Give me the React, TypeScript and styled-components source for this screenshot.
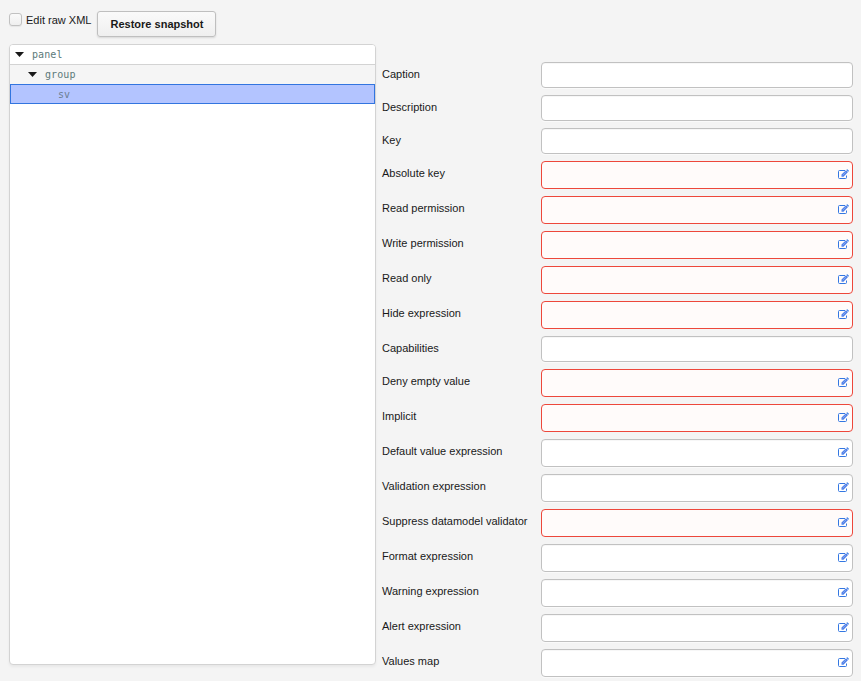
import React from 'react';
import styled, { createGlobalStyle } from 'styled-components';

const GlobalStyle = createGlobalStyle`
  html, body { margin: 0; padding: 0; background: #f4f4f4; }
  body { overflow: hidden; }
  * { box-sizing: border-box; }
`;

const Page = styled.div`
  width: 861px;
  height: 681px;
  padding: 11px 8px 0 9px;
  overflow: hidden;
  background: #f4f4f4;
  color: #191919;
  font-family: "Liberation Sans", Arial, sans-serif;
  font-size: 11px;
`;

const Toolbar = styled.header`
  display: flex;
  align-items: flex-start;
  height: 33px;
`;

const CheckLabel = styled.label`
  display: flex;
  align-items: flex-start;
  width: 88px;
  line-height: 15px;
  padding-top: 2px;
  white-space: nowrap;
`;

const CheckBox = styled.input`
  appearance: none;
  flex: none;
  width: 13px;
  height: 13px;
  margin: 0 4px 0 0;
  border: 1px solid #c1c1c1;
  border-radius: 3px;
  background: linear-gradient(#fafafa, #efefef);
  box-shadow: 0 1px 1px rgba(0, 0, 0, 0.06);
`;

const Button = styled.button`
  width: 119px;
  height: 26px;
  padding: 0 0 0 1px;
  border: 1px solid #bfbfbf;
  border-radius: 3px;
  background: linear-gradient(#fafafa, #efefef);
  box-shadow: 0 1px 2px rgba(0, 0, 0, 0.12);
  color: #191919;
  font: bold 11px/24px "Liberation Sans", Arial, sans-serif;
`;

const Content = styled.main`
  display: grid;
  grid-template-columns: 367px 1fr;
  column-gap: 6px;
`;

const Tree = styled.div`
  height: 621px;
  border: 1px solid #d3d3d3;
  border-radius: 4px;
  background: #fff;
  box-shadow: 0 2px 3px rgba(0, 0, 0, 0.05);
  overflow: hidden;
`;

const TreeRow = styled.div<{ $depth: number; $state?: 'odd' | 'selected' }>`
  display: flex;
  align-items: center;
  height: ${p => (p.$state === 'odd' ? 19 : 20)}px;
  padding-top: ${p => (p.$state === 'selected' ? 1 : 0)}px;
  padding-left: ${p => 5 + p.$depth * 13 - (p.$state === 'selected' ? 1 : 0)}px;
  border: ${p => (p.$state === 'selected' ? '1px solid #3275df' : '0 solid #d3d3d3')};
  ${p => !p.$state && 'border-bottom-width: 1px;'}
  background: ${p => (p.$state === 'selected' ? '#b3c4ff' : p.$state ? '#f5f5f5' : '#fff')};
  color: ${p => (p.$state === 'selected' ? '#6c7f92' : '#5c7a7a')};
  font: 10px/18px "DejaVu Sans Mono", monospace;
  letter-spacing: 0.1px;
`;

const ArrowSlot = styled.span`
  display: flex;
  width: 17px;
`;

const Form = styled.form`
  display: flex;
  flex-direction: column;
  gap: 7px;
  padding-top: 18px;
`;

const FieldRow = styled.label`
  display: grid;
  grid-template-columns: 159px 312px;
`;

const Caption = styled.span`
  padding-top: 6px;
  line-height: 13px;
  white-space: nowrap;
`;

const Field = styled.span<{ $plain?: boolean; $error?: boolean }>`
  display: flex;
  align-items: center;
  justify-content: flex-end;
  height: ${p => (p.$plain ? 26 : 28)}px;
  padding: 0 3px 2px 0;
  border: 1px solid ${p => (p.$error ? '#ed473b' : '#c1c1c1')};
  border-radius: 4px;
  background: ${p => (p.$error ? '#fffbfa' : '#fff')};
  box-shadow: ${p => (p.$error ? 'none' : 'inset 0 1px 0 #f7f7f7, 0 1px 0 #fafafa')};
`;

type Kind = 'plain' | 'error' | 'normal';

const fields: [string, Kind][] = [
  ['Caption', 'plain'],
  ['Description', 'plain'],
  ['Key', 'plain'],
  ['Absolute key', 'error'],
  ['Read permission', 'error'],
  ['Write permission', 'error'],
  ['Read only', 'error'],
  ['Hide expression', 'error'],
  ['Capabilities', 'plain'],
  ['Deny empty value', 'error'],
  ['Implicit', 'error'],
  ['Default value expression', 'normal'],
  ['Validation expression', 'normal'],
  ['Suppress datamodel validator', 'error'],
  ['Format expression', 'normal'],
  ['Warning expression', 'normal'],
  ['Alert expression', 'normal'],
  ['Values map', 'normal'],
];

const Arrow = () => (
  <svg width="9" height="5" viewBox="0 0 9 5" aria-hidden="true">
    <path d="M0 0h9L4.5 5z" fill="#191919" />
  </svg>
);

const EditIcon = () => (
  <svg width="11" height="10" viewBox="0 0 11 10" fill="none" aria-hidden="true">
    <path d="M7 1.5H1.5a1 1 0 0 0-1 1v6a1 1 0 0 0 1 1H7.5a1 1 0 0 0 1-1V6.5" stroke="#3377e2" />
    <path d="M3.5 7.8V5.6L8 1.2l2 1.9L5.5 7.8z" fill="#4d7fe8" />
    <path d="M8.4.8l.5-.4a.5.5 0 0 1 .7 0l1.1 1.1a.5.5 0 0 1 0 .7l-.5.5z" fill="#3377e2" />
    <path d="M4.7 6.2l3.4-3.4" stroke="#b9cbf8" strokeWidth=".5" />
  </svg>
);

export default function App() {
  return (
    <>
      <GlobalStyle />
      <Page>
        <Toolbar>
          <CheckLabel>
            <CheckBox type="checkbox" />
            Edit raw XML
          </CheckLabel>
          <Button type="button">Restore snapshot</Button>
        </Toolbar>
        <Content>
          <Tree>
            <TreeRow $depth={0}><ArrowSlot><Arrow /></ArrowSlot>panel</TreeRow>
            <TreeRow $depth={1} $state="odd"><ArrowSlot><Arrow /></ArrowSlot>group</TreeRow>
            <TreeRow $depth={2} $state="selected"><ArrowSlot />sv</TreeRow>
          </Tree>
          <Form>
            {fields.map(([name, kind]) => (
              <FieldRow key={name}>
                <Caption>{name}</Caption>
                <Field $plain={kind === 'plain'} $error={kind === 'error'}>
                  {kind !== 'plain' && <EditIcon />}
                </Field>
              </FieldRow>
            ))}
          </Form>
        </Content>
      </Page>
    </>
  );
}
